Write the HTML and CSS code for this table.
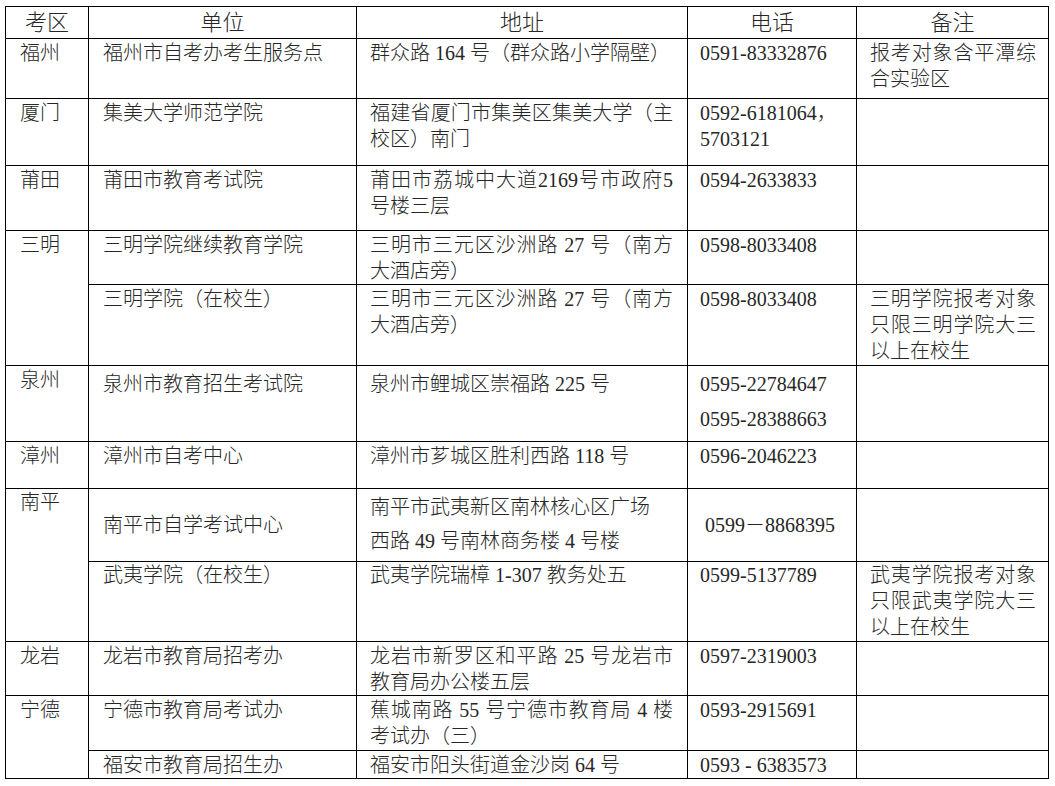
FILE: index.html
```html
<!DOCTYPE html>
<html lang="zh-CN">
<head>
<meta charset="utf-8">
<title>自考报名点</title>
<link rel="stylesheet" href="styles.css">
</head>
<body>
<table class="sheet">
  <tr class="r-head">
    <th class="w1">考区</th>
    <th class="w2">单位</th>
    <th class="w3">地址</th>
    <th class="w4">电话</th>
    <th class="w5">备注</th>
  </tr>
  <tr class="r-fz">
    <td>福州</td>
    <td>福州市自考办考生服务点</td>
    <td class="addr">群众路 164 号（群众路小学隔壁）</td>
    <td class="tel">0591-83332876</td>
    <td class="note"><span class="fl">报考对象含平潭综</span>合实验区</td>
  </tr>
  <tr class="r-xm">
    <td>厦门</td>
    <td>集美大学师范学院</td>
    <td class="addr"><span class="fl">福建省厦门市集美区集美大学（主</span>校区）南门</td>
    <td class="tel">0592-6181064，<br>5703121</td>
    <td class="note"></td>
  </tr>
  <tr class="r-pt">
    <td>莆田</td>
    <td>莆田市教育考试院</td>
    <td class="addr"><span class="fl">莆田市荔城中大道2169号市政府5</span>号楼三层</td>
    <td class="tel">0594-2633833</td>
    <td class="note"></td>
  </tr>
  <tr class="r-sm1">
    <td rowspan="2">三明</td>
    <td>三明学院继续教育学院</td>
    <td class="addr"><span class="fl">三明市三元区沙洲路 27 号（南方</span>大酒店旁）</td>
    <td class="tel">0598-8033408</td>
    <td class="note"></td>
  </tr>
  <tr class="r-sm2">
    <td>三明学院（在校生）</td>
    <td class="addr"><span class="fl">三明市三元区沙洲路 27 号（南方</span>大酒店旁）</td>
    <td class="tel">0598-8033408</td>
    <td class="note"><span class="fl">三明学院报考对象</span><span class="fl">只限三明学院大三</span>以上在校生</td>
  </tr>
  <tr class="r-qz">
    <td>泉州</td>
    <td class="tall">泉州市教育招生考试院</td>
    <td class="addr tall">泉州市鲤城区崇福路 225 号</td>
    <td class="tel tall">0595-22784647<br>0595-28388663</td>
    <td class="note"></td>
  </tr>
  <tr class="r-zz">
    <td>漳州</td>
    <td>漳州市自考中心</td>
    <td class="addr">漳州市芗城区胜利西路 118 号</td>
    <td class="tel">0596-2046223</td>
    <td class="note"></td>
  </tr>
  <tr class="r-np1">
    <td rowspan="2" class="flush">南平</td>
    <td class="mid">南平市自学考试中心</td>
    <td class="addr wide">南平市武夷新区南林核心区广场<br>西路 49 号南林商务楼 4 号楼</td>
    <td class="tel mid indent">0599－8868395</td>
    <td class="note"></td>
  </tr>
  <tr class="r-np2">
    <td class="flush">武夷学院（在校生）</td>
    <td class="addr flush">武夷学院瑞樟 1-307 教务处五</td>
    <td class="tel flush">0599-5137789</td>
    <td class="note flush"><span class="fl">武夷学院报考对象</span><span class="fl">只限武夷学院大三</span>以上在校生</td>
  </tr>
  <tr class="r-ly">
    <td>龙岩</td>
    <td>龙岩市教育局招考办</td>
    <td class="addr"><span class="fl">龙岩市新罗区和平路 25 号龙岩市</span>教育局办公楼五层</td>
    <td class="tel">0597-2319003</td>
    <td class="note"></td>
  </tr>
  <tr class="r-nd1">
    <td rowspan="2">宁德</td>
    <td>宁德市教育局考试办</td>
    <td class="addr"><span class="fl">蕉城南路 55 号宁德市教育局 4 楼</span>考试办（三）</td>
    <td class="tel">0593-2915691</td>
    <td class="note"></td>
  </tr>
  <tr class="r-fa">
    <td>福安市教育局招生办</td>
    <td class="addr">福安市阳头街道金沙岗 64 号</td>
    <td class="tel">0593 - 6383573</td>
    <td class="note"></td>
  </tr>
</table>
</body>
</html>
```

FILE: styles.css
```css
html, body {
  margin: 0;
  padding: 0;
  background: #ffffff;
}

body {
  font-family: "Liberation Serif", "Noto Sans CJK SC", serif;
  color: #262626;
}

.sheet {
  border-collapse: separate;
  border-spacing: 0;
  table-layout: fixed;
  width: 1044px;
  margin: 6px 0 0 5px;
  border-top: 1px solid #000;
  border-left: 1px solid #000;
  font-size: 20px;
  line-height: 26px;
}

.sheet th,
.sheet td {
  box-sizing: border-box;
  border-right: 1px solid #000;
  border-bottom: 1px solid #000;
  padding: 1px 12px 0 14px;
  vertical-align: top;
  text-align: left;
  font-weight: 300;
  overflow: hidden;
}

.sheet th {
  font-size: 22px;
  line-height: 26px;
  text-align: center;
  vertical-align: middle;
  padding: 0;
}

.w1 { width: 83px; }
.w2 { width: 268px; }
.w3 { width: 331px; }
.w4 { width: 169px; }
.w5 { width: 192px; }

.sheet td.addr { padding-left: 13px; padding-right: 14px; }
.sheet td.tel { padding-left: 12px; padding-right: 6px; }
.sheet td.note { padding-left: 13px; padding-right: 12px; }

.fl {
  display: block;
  white-space: nowrap;
  text-align: justify;
  text-align-last: justify;
}

.sheet td.tall { line-height: 35px; }
.sheet td.wide { line-height: 34px; }
.sheet td.mid { vertical-align: middle; padding-top: 0; }
.sheet td.indent { padding-left: 17px; }
.sheet td.flush { padding-top: 0; }

.r-head { height: 32px; }
.r-fz { height: 60px; }
.r-xm { height: 67px; }
.r-pt { height: 65px; }
.r-sm1 { height: 54px; }
.r-sm2 { height: 81px; }
.r-qz { height: 76px; }
.r-zz { height: 47px; }
.r-np1 { height: 73px; }
.r-np2 { height: 80px; }
.r-ly { height: 54px; }
.r-nd1 { height: 55px; }
.r-fa { height: 28px; }
```
